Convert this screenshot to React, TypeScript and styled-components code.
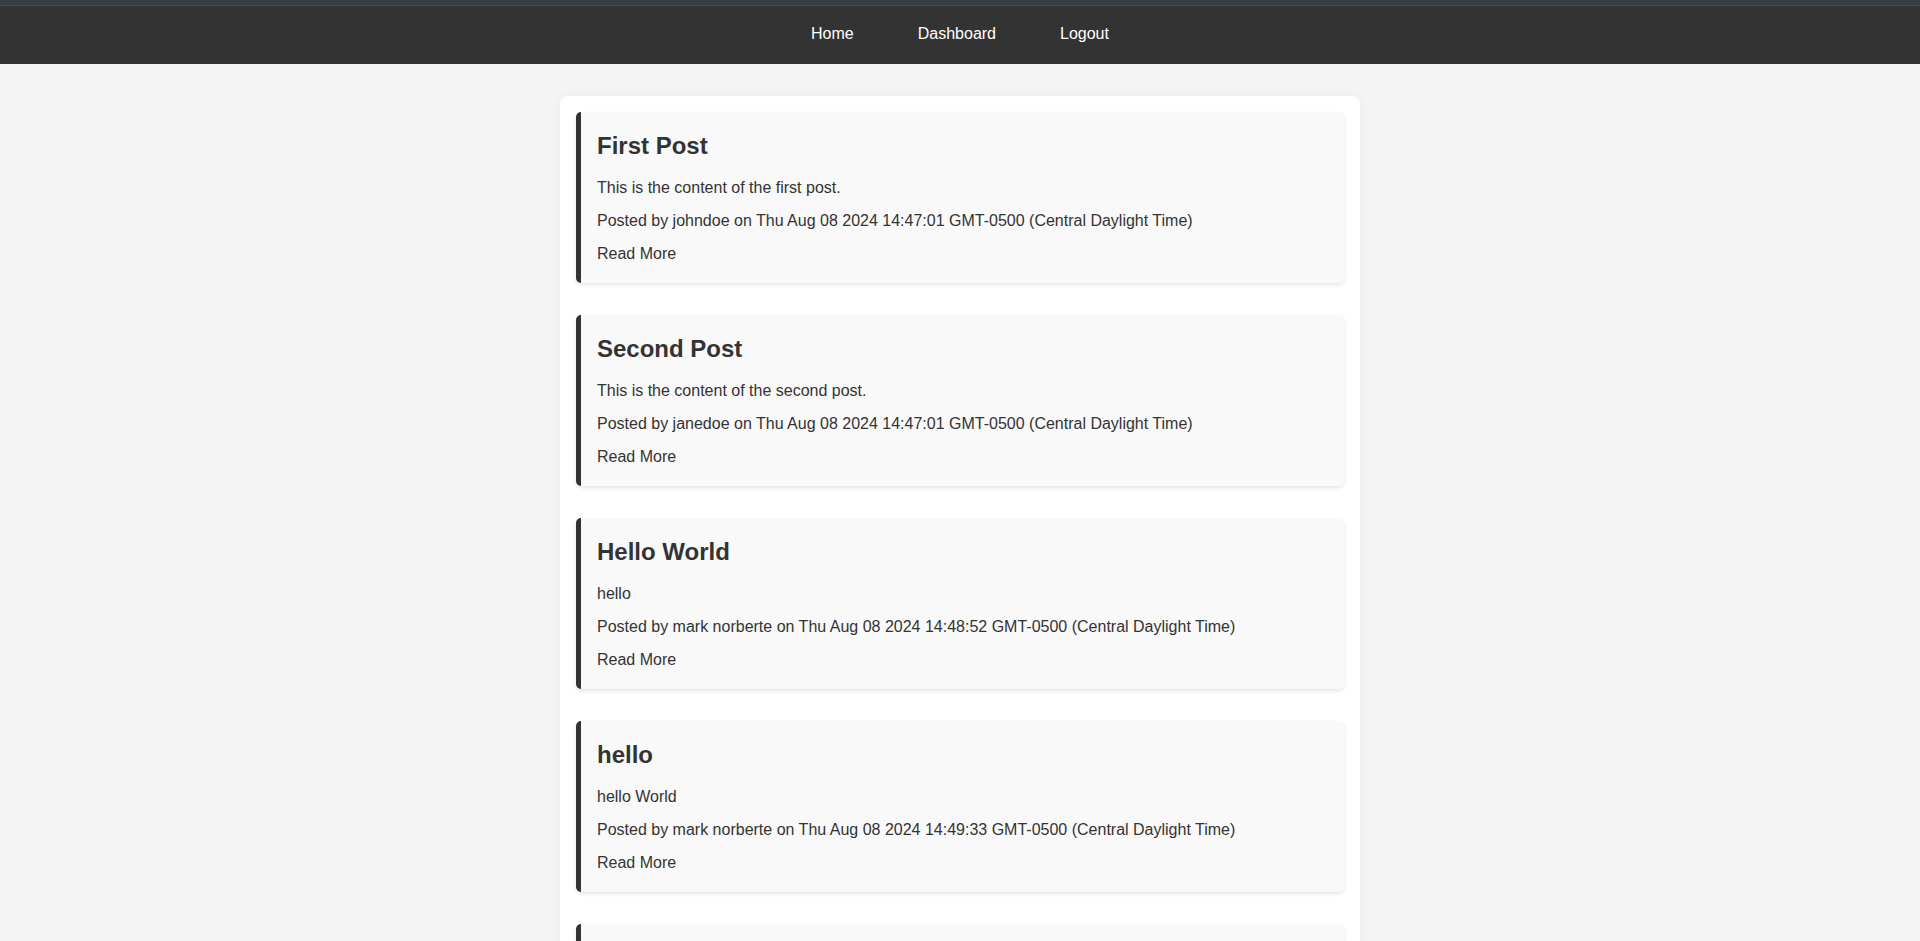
import React from "react";
import styled, { createGlobalStyle } from "styled-components";

type Post = {
  id: number;
  title: string;
  content: string;
  author: string;
  date: string;
};

const posts: Post[] = [
  {
    id: 1,
    title: "First Post",
    content: "This is the content of the first post.",
    author: "johndoe",
    date: "Thu Aug 08 2024 14:47:01 GMT-0500 (Central Daylight Time)",
  },
  {
    id: 2,
    title: "Second Post",
    content: "This is the content of the second post.",
    author: "janedoe",
    date: "Thu Aug 08 2024 14:47:01 GMT-0500 (Central Daylight Time)",
  },
  {
    id: 3,
    title: "Hello World",
    content: "hello",
    author: "mark norberte",
    date: "Thu Aug 08 2024 14:48:52 GMT-0500 (Central Daylight Time)",
  },
  {
    id: 4,
    title: "hello",
    content: "hello World",
    author: "mark norberte",
    date: "Thu Aug 08 2024 14:49:33 GMT-0500 (Central Daylight Time)",
  },
  {
    id: 5,
    title: "Another Post",
    content: "more content",
    author: "mark norberte",
    date: "Thu Aug 08 2024 14:50:12 GMT-0500 (Central Daylight Time)",
  },
];

const GlobalStyle = createGlobalStyle`
  body {
    margin: 0;
    background: #f4f4f4;
    color: #333;
    font-family: "Liberation Sans", Arial, sans-serif;
    font-size: 16px;
  }
`;

// top bar with the nav links
const Header = styled.header`
  background: #333;
  border-top: 5px solid #393d4a;
  box-shadow: inset 0 1px 0 #4a4a4a;
  padding: 20px 0 21px;
  line-height: 18px;
`;

const Nav = styled.nav`
  display: flex;
  justify-content: center;
  gap: 64px;
`;

const NavLink = styled.a`
  color: #fff;
  text-decoration: none;
`;

const Container = styled.main`
  width: 800px;
  box-sizing: border-box;
  margin: 32px auto;
  padding: 16px;
  background: #fff;
  border-radius: 8px;
  box-shadow: 0 0 10px rgba(0, 0, 0, 0.05);
  display: flex;
  flex-direction: column;
  gap: 32px;
`;

const Card = styled.article`
  background: #f9f9f9;
  border-left: 5px solid #333;
  border-radius: 5px;
  box-shadow: 0 2px 4px rgba(0, 0, 0, 0.1);
  padding: 20px 16px 20px 16px;
`;

const Title = styled.h2`
  margin: 0 0 19px;
  font-size: 24px;
  line-height: 28px;
  font-weight: bold;
`;

const Line = styled.p<{ $last?: boolean }>`
  margin: 0 0 ${(p) => (p.$last ? 0 : 15)}px;
  line-height: 18px;
`;

const ReadMore = styled.a`
  color: #333;
  text-decoration: none;
`;

function PostCard({ post }: { post: Post }) {
  return (
    <Card>
      <Title>{post.title}</Title>
      <Line>{post.content}</Line>
      <Line>
        Posted by {post.author} on {post.date}
      </Line>
      <Line $last>
        <ReadMore href="#">Read More</ReadMore>
      </Line>
    </Card>
  );
}

export default function App() {
  return (
    <>
      <GlobalStyle />
      <Header>
        <Nav>
          <NavLink href="#">Home</NavLink>
          <NavLink href="#">Dashboard</NavLink>
          <NavLink href="#">Logout</NavLink>
        </Nav>
      </Header>
      <Container>
        {posts.map((p) => (
          <PostCard key={p.id} post={p} />
        ))}
      </Container>
    </>
  );
}
